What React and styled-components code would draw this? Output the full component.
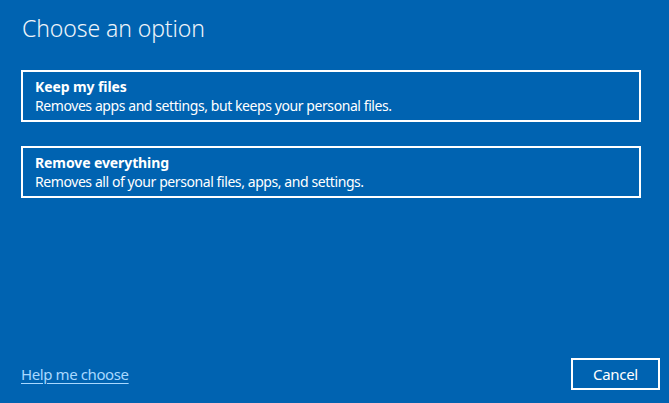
import React from 'react';
import styled, { createGlobalStyle } from 'styled-components';

const GlobalStyle = createGlobalStyle`
  html, body {
    margin: 0;
    padding: 0;
    background-color: #0063b1;
  }
  body {
    font-family: "Noto Sans", "Open Sans", sans-serif;
    color: #fff;
  }
`;

const Screen = styled.div`
  width: 669px;
  height: 403px;
  box-sizing: border-box;
  background-color: #0063b1;
  padding: 12px 9px 13px 21px;
  display: flex;
  flex-direction: column;
`;

const Title = styled.h1`
  margin: 0 0 0 1px;
  font-size: 23px;
  font-weight: 300;
  line-height: 32px;
  letter-spacing: -0.1px;
  color: #eef4fa;
`;

const OptionList = styled.div`
  display: flex;
  flex-direction: column;
  gap: 24px;
  margin-top: 26px;
`;

const Option = styled.button`
  width: 620px;
  height: 52px;
  box-sizing: border-box;
  border: 2px solid #fff;
  background: transparent;
  color: #fff;
  text-align: left;
  padding: 5px 12px 0;
  font-family: inherit;
  cursor: pointer;
  display: flex;
  flex-direction: column;
`;

const OptionTitle = styled.span`
  font-size: 14px;
  font-weight: 700;
  line-height: 19px;
  letter-spacing: -0.1px;
`;

const OptionText = styled.span`
  font-size: 14px;
  line-height: 19px;
  letter-spacing: -0.42px;
`;

const Footer = styled.div`
  margin-top: auto;
  display: flex;
  align-items: center;
  justify-content: space-between;
`;

const HelpLink = styled.a`
  font-size: 15px;
  letter-spacing: -0.4px;
  color: #a8d8ff;
  text-decoration: underline;
  text-underline-offset: 3px;
  cursor: pointer;
`;

const CancelButton = styled.button`
  width: 89px;
  height: 32px;
  box-sizing: border-box;
  border: 2px solid #fff;
  background: transparent;
  color: #fff;
  font-family: inherit;
  font-size: 15px;
  letter-spacing: -0.3px;
  cursor: pointer;
`;

const options = [
  { title: 'Keep my files', text: 'Removes apps and settings, but keeps your personal files.' },
  { title: 'Remove everything', text: 'Removes all of your personal files, apps, and settings.' },
];

const App = () => (
  <>
    <GlobalStyle />
    <Screen>
      <Title>Choose an option</Title>
      <OptionList>
        {options.map((o) => (
          <Option key={o.title}>
            <OptionTitle>{o.title}</OptionTitle>
            <OptionText>{o.text}</OptionText>
          </Option>
        ))}
      </OptionList>
      <Footer>
        <HelpLink>Help me choose</HelpLink>
        <CancelButton>Cancel</CancelButton>
      </Footer>
    </Screen>
  </>
);

export default App;
